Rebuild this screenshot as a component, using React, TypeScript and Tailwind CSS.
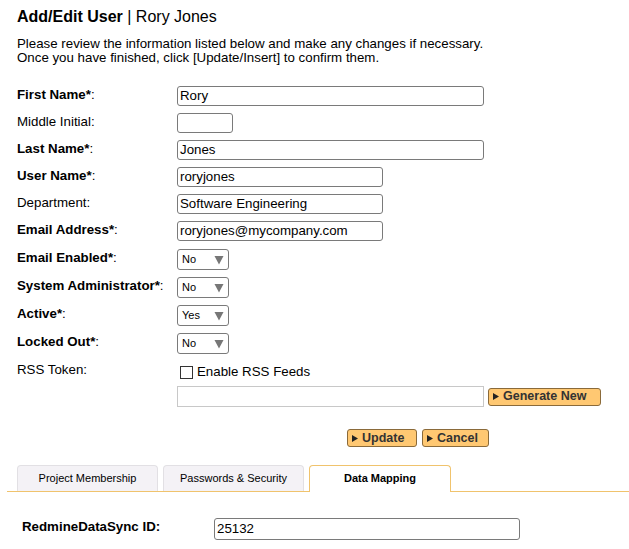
import React from "react";

const font = { fontFamily: '"Liberation Sans", Arial, sans-serif' };

function Label({ text, bold = false, req = false }: { text: string; bold?: boolean; req?: boolean }) {
  return (
    <div className="w-[160px] shrink-0 pt-[1px] text-[13.3px] leading-[16px] text-black">
      <span className={bold ? "font-bold" : ""}>{text}</span>
      {req ? <span className={bold ? "font-bold" : ""}>*</span> : null}
      <span>:</span>
    </div>
  );
}

function TextInput({ value, w }: { value: string; w: string }) {
  return (
    <div className={`${w} h-[20px] rounded-[3px] border border-[#7a7a7a] bg-white px-[2px] text-[13.3px] leading-[18px] text-black`}>
      {value}
    </div>
  );
}

function Select({ value }: { value: string }) {
  return (
    <div className="flex h-[21px] w-[52px] items-center justify-between rounded-[3px] border border-[#7a7a7a] bg-white pl-[4px] pr-[4px] text-[11px] text-black">
      <span>{value}</span>
      <svg width="10" height="10" viewBox="0 0 10 10">
        <polygon points="0.5,1 9.5,1 5,9.5" fill="#777" />
      </svg>
    </div>
  );
}

function OrangeButton({ text, w }: { text: string; w: string }) {
  return (
    <div className={`${w} flex h-[18px] items-center gap-[4px] rounded-[3px] border border-[#8a6a3a] bg-[#ffc872] pl-[4px] text-[12.5px] font-bold leading-none text-[#333]`}>
      <svg width="6" height="7" viewBox="0 0 6 7">
        <polygon points="0,0 6,3.5 0,7" fill="#222" />
      </svg>
      <span>{text}</span>
    </div>
  );
}

export default function App() {
  return (
    <div className="min-h-[549px] w-[629px] bg-white" style={font}>
      <div className="pl-[17px] pt-[7px]">
        <div className="text-[16px] leading-[20px] text-black">
          <span className="font-bold">Add/Edit User</span> | Rory Jones
        </div>
        <div className="mt-[10px] text-[13.3px] leading-[14px] text-black">
          <div>Please review the information listed below and make any changes if necessary.</div>
          <div>Once you have finished, click [Update/Insert] to confirm them.</div>
        </div>
        <div className="mt-[21px] flex flex-col">
          <div className="flex h-[27px] items-start">
            <Label text="First Name" bold req />
            <TextInput value="Rory" w="w-[307px]" />
          </div>
          <div className="flex h-[27px] items-start">
            <Label text="Middle Initial" />
            <TextInput value="" w="w-[56px]" />
          </div>
          <div className="flex h-[27px] items-start">
            <Label text="Last Name" bold req />
            <TextInput value="Jones" w="w-[307px]" />
          </div>
          <div className="flex h-[27px] items-start">
            <Label text="User Name" bold req />
            <TextInput value="roryjones" w="w-[206px]" />
          </div>
          <div className="flex h-[27px] items-start">
            <Label text="Department" />
            <TextInput value="Software Engineering" w="w-[206px]" />
          </div>
          <div className="flex h-[28px] items-start">
            <Label text="Email Address" bold req />
            <TextInput value="roryjones@mycompany.com" w="w-[206px]" />
          </div>
          <div className="flex h-[28px] items-start">
            <Label text="Email Enabled" bold req />
            <Select value="No" />
          </div>
          <div className="flex h-[28px] items-start">
            <div className="w-[160px] shrink-0 pt-[1px] text-[13.3px] leading-[16px]">
              <span className="font-bold">System Administrator*</span>:
            </div>
            <Select value="No" />
          </div>
          <div className="flex h-[28px] items-start">
            <Label text="Active" bold req />
            <Select value="Yes" />
          </div>
          <div className="flex h-[28px] items-start">
            <Label text="Locked Out" bold req />
            <Select value="No" />
          </div>
          <div className="flex items-start">
            <Label text="RSS Token" />
            <div className="flex flex-col">
              <div className="mt-[3px] flex items-center gap-[4px] pl-[3px] text-[13.3px] leading-[16px]">
                <div className="h-[13px] w-[13px] border border-[#333] bg-white" />
                <span>Enable RSS Feeds</span>
              </div>
              <div className="mt-[6px] flex items-center gap-[4px]">
                <div className="h-[21px] w-[307px] border border-[#c8c8c8] bg-white" />
                <OrangeButton text="Generate New" w="w-[113px]" />
              </div>
            </div>
          </div>
          <div className="mt-[22px] flex gap-[5px] pl-[330px]">
            <OrangeButton text="Update" w="w-[70px]" />
            <OrangeButton text="Cancel" w="w-[67px]" />
          </div>
        </div>
      </div>
      <div className="ml-[7px] mt-[18px] flex h-[27px] items-end gap-[5px] border-b border-[#f0c36d] pl-[10px]">
        <div className="flex h-[26px] w-[141px] items-center justify-center rounded-t-[4px] border border-b-0 border-[#e2e0e4] bg-[#f4f2f6] text-[11px] text-black">
          Project Membership
        </div>
        <div className="flex h-[26px] w-[141px] items-center justify-center rounded-t-[4px] border border-b-0 border-[#e2e0e4] bg-[#f4f2f6] text-[11px] text-black">
          Passwords &amp; Security
        </div>
        <div className="-mb-[1px] flex h-[27px] w-[142px] items-center justify-center rounded-t-[4px] border border-b-0 border-[#f0c36d] bg-white pb-[1px] text-[11px] font-bold text-black">
          Data Mapping
        </div>
      </div>
      <div className="mt-[26px] flex items-start pl-[22px]">
        <div className="w-[192px] shrink-0 pt-[1px] text-[13.3px] font-bold leading-[16px]">RedmineDataSync ID:</div>
        <div className="h-[22px] w-[306px] rounded-[3px] border border-[#7a7a7a] bg-white px-[2px] text-[13.3px] leading-[20px]">25132</div>
      </div>
    </div>
  );
}
